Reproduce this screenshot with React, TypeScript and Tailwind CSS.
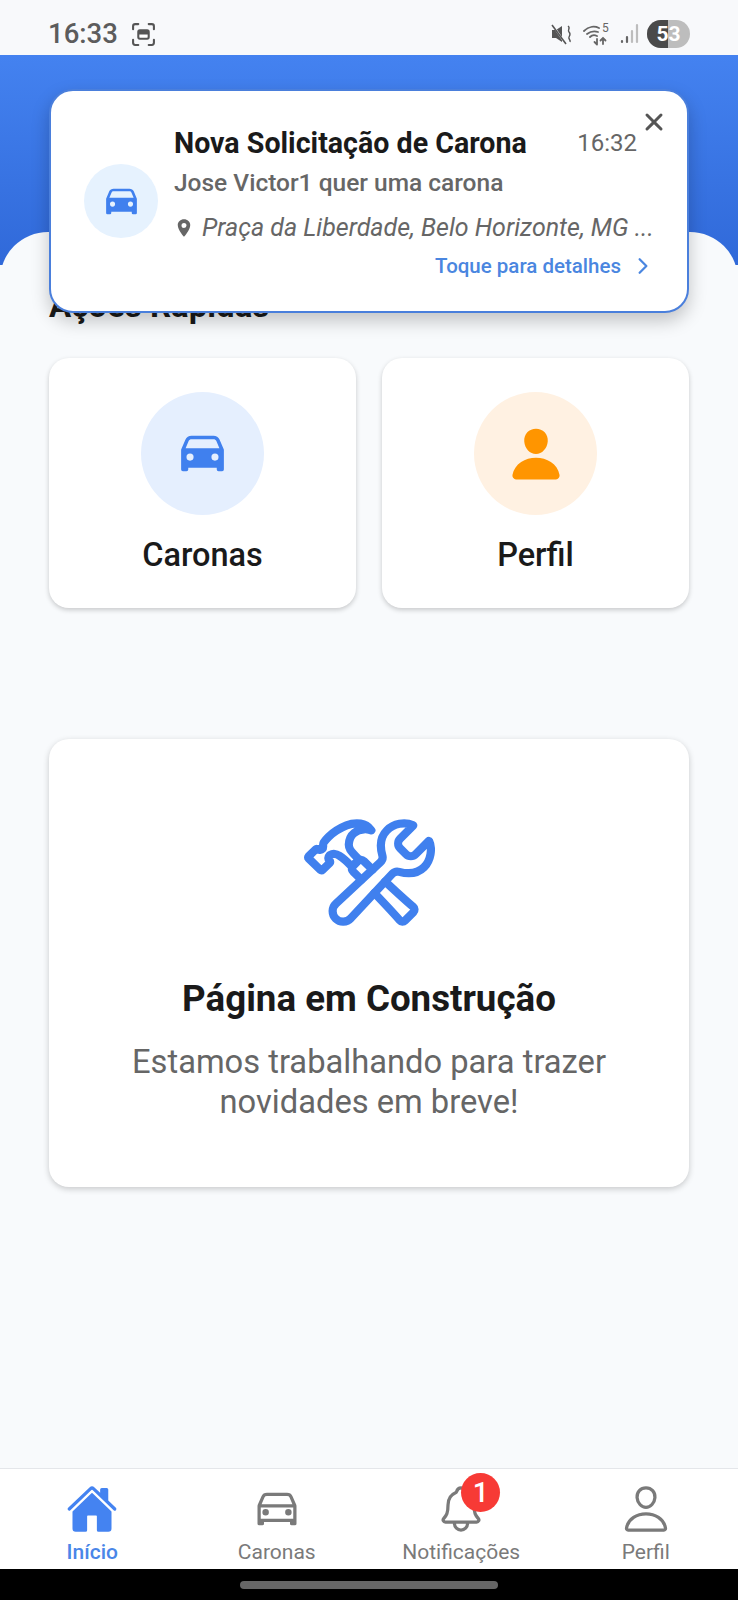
import React from "react";
import {
  IoCar,
  IoCarOutline,
  IoChevronForward,
  IoClose,
  IoConstructOutline,
  IoHome,
  IoLocationSharp,
  IoNotificationsOutline,
  IoPerson,
  IoPersonOutline,
} from "react-icons/io5";

function StatusBar() {
  return (
    <div className="h-[55px] bg-[#f8f9fb] flex items-center justify-between pl-[48px] pr-[48px] pt-[20px] pb-[7px]">
      <div className="flex items-center gap-[13px]">
        <span className="text-[27.5px] font-medium text-[#5c5c5c] leading-none">16:33</span>
        <svg width="25" height="25" viewBox="0 0 24 24" fill="none" stroke="#555" strokeWidth="2" strokeLinecap="round">
          <path d="M2 7V4a2 2 0 0 1 2-2h3M17 2h3a2 2 0 0 1 2 2v3M22 17v3a2 2 0 0 1-2 2h-3M7 22H4a2 2 0 0 1-2-2v-3" />
          <rect x="7" y="8" width="10" height="8" rx="1.5" fill="#fff" />
          <rect x="7" y="8" width="10" height="4" fill="#555" stroke="none" />
        </svg>
      </div>
      <div className="flex items-center gap-[7px]">
        <svg width="22" height="24" viewBox="0 0 22 24" fill="#555">
          <path d="M1 8h4l6-4v16l-6-4H1z" />
          <path d="M1 2l13 19" stroke="#f8f9fb" strokeWidth="2" />
          <path d="M1 3l14 19" stroke="#555" strokeWidth="1.6" />
          <path d="M17 4c3 2-1 4 1 6s1 3 0 5 2 3 1 5" fill="none" stroke="#555" strokeWidth="1.4" />
        </svg>
        <svg width="30" height="24" viewBox="0 0 30 24" fill="none" stroke="#666" strokeWidth="1.8" strokeLinecap="round" className="ml-[3px]">
          <path d="M1 9c5-5 11-5 15-3M4 12c4-3 8-3 11-2M7 15c2-2 5-2 7-1" />
          <path d="M14 17v5M11.5 20l2.5 2.5M20 16v6M17.5 18.5L20 16l2.5 2.5" />
          <text x="19" y="10" fontSize="12" fill="#666" stroke="none" fontFamily="Roboto, sans-serif">5</text>
        </svg>
        <svg width="20" height="24" viewBox="0 0 20 24" strokeWidth="2.2" strokeLinecap="round">
          <path d="M2 20v-1M7 20v-5" stroke="#666" />
          <path d="M12 20V9M17 20V3" stroke="#bdbdbd" />
        </svg>
        <div className="relative h-[28px] w-[43px] rounded-full overflow-hidden flex bg-[#bdbdbd]">
          <div className="w-[21px] bg-[#4a4a4a]" />
          <span className="absolute inset-0 flex items-center justify-center text-white text-[21px] font-bold leading-none">53</span>
        </div>
      </div>
    </div>
  );
}

function ActionCard({ label, circle, children }: { label: string; circle: string; children: React.ReactNode }) {
  return (
    <div className="flex-1 h-[250px] bg-white rounded-[20px] shadow-[0_2px_5px_rgba(0,0,0,0.2)] flex flex-col items-center pt-[34px]">
      <div className={`w-[123px] h-[123px] rounded-full flex items-center justify-center ${circle}`}>{children}</div>
      <span className="mt-[20px] text-[32.5px] leading-[40px] font-medium text-[#1a1a1a]">{label}</span>
    </div>
  );
}

function Notification() {
  return (
    <div className="absolute left-[49px] top-[89px] w-[640px] h-[224px] bg-white rounded-[24px] border-2 border-[#4a7fdc] shadow-[0_8px_18px_rgba(0,0,0,0.22)] flex items-center pl-[33px] pr-[36px]">
      <div className="w-[74px] h-[74px] rounded-full bg-[#e6f2fe] flex items-center justify-center shrink-0">
        <IoCar className="text-[#4080ee]" size={41} />
      </div>
      <div className="ml-[16px] flex-1 min-w-0 pt-[3px]">
        <div className="flex items-center justify-between pr-[14px]">
          <span className="text-[28.6px] leading-[34px] font-bold text-[#1a1a1a] whitespace-nowrap">Nova Solicitação de Carona</span>
          <span className="text-[24px] leading-[34px] text-[#666]">16:32</span>
        </div>
        <div className="mt-[8px] text-[24.5px] leading-[30px] font-medium text-[#666] whitespace-nowrap">Jose Victor1 quer uma carona</div>
        <div className="mt-[15px] flex items-center gap-[8px]">
          <IoLocationSharp className="text-[#666] shrink-0" size={20} />
          <span className="text-[25px] leading-[30px] italic text-[#666] whitespace-nowrap">Praça da Liberdade, Belo Horizonte, MG ...</span>
        </div>
        <div className="mt-[9px] -mr-[4px] flex items-center justify-end gap-[10px]">
          <span className="text-[20.5px] leading-[28px] font-medium text-[#4a86e0]">Toque para detalhes</span>
          <IoChevronForward className="text-[#4a86e0]" size={24} />
        </div>
      </div>
      <IoClose className="absolute right-[17px] top-[15px] text-[#555]" size={32} />
    </div>
  );
}

function Tab({ label, active, children }: { label: string; active?: boolean; children: React.ReactNode }) {
  return (
    <div className="flex-1 flex flex-col items-center">
      <div className="relative h-[66px] flex items-end justify-center">{children}</div>
      <span className={`mt-[3px] text-[21px] leading-[28px] ${active ? "font-medium text-[#4a86e8]" : "text-[#7a7a7a]"}`}>{label}</span>
    </div>
  );
}

export default function App() {
  return (
    <div className="relative w-[738px] h-[1600px] overflow-hidden flex flex-col bg-[#f8fafc] [font-family:Roboto,'Liberation_Sans',sans-serif]">
      <StatusBar />
      <div className="h-[210px] bg-gradient-to-b from-[#4482f0] to-[#3069d9]" />
      <div className="flex-1 -mt-[33px] bg-[#f8fafc] rounded-t-[48px] flex flex-col px-[49px] pt-[56px]">
        <h2 className="text-[33px] leading-[36px] font-bold text-[#1a1a1a]">Ações Rápidas</h2>
        <div className="mt-[34px] flex gap-[26px]">
          <ActionCard label="Caronas" circle="bg-[#e5effe]">
            <IoCar className="text-[#4080ee]" size={57} />
          </ActionCard>
          <ActionCard label="Perfil" circle="bg-[#fff1e2]">
            <IoPerson className="text-[#ff9500]" size={58} />
          </ActionCard>
        </div>
        <div className="mt-[131px] h-[448px] bg-white rounded-[20px] shadow-[0_2px_6px_rgba(0,0,0,0.2)] flex flex-col items-center pt-[68px]">
          <IoConstructOutline className="text-[#4080ee]" size={131} />
          <div className="mt-[38px] text-[36.7px] leading-[46px] font-bold text-[#1a1a1a]">Página em Construção</div>
          <div className="mt-[20px] text-[32.7px] leading-[40px] text-[#666] text-center">
            Estamos trabalhando para trazer
            <br />
            novidades em breve!
          </div>
        </div>
      </div>
      <div className="h-[101px] bg-white border-t border-[#e4e6ea] flex">
        <Tab label="Início" active>
          <IoHome className="text-[#4483f1]" size={52} />
        </Tab>
        <Tab label="Caronas">
          <IoCarOutline className="text-[#7a7a7a]" size={52} />
        </Tab>
        <Tab label="Notificações">
          <IoNotificationsOutline className="text-[#7a7a7a]" size={52} />
          <span className="absolute left-[26px] top-[4px] w-[39px] h-[39px] rounded-full bg-[#f73a35] text-white text-[28px] font-medium flex items-center justify-center">1</span>
        </Tab>
        <Tab label="Perfil">
          <IoPersonOutline className="text-[#7a7a7a]" size={52} />
        </Tab>
      </div>
      <div className="h-[31px] bg-black flex items-center justify-center">
        <div className="w-[258px] h-[8px] rounded-full bg-[#666]" />
      </div>
      <Notification />
    </div>
  );
}
